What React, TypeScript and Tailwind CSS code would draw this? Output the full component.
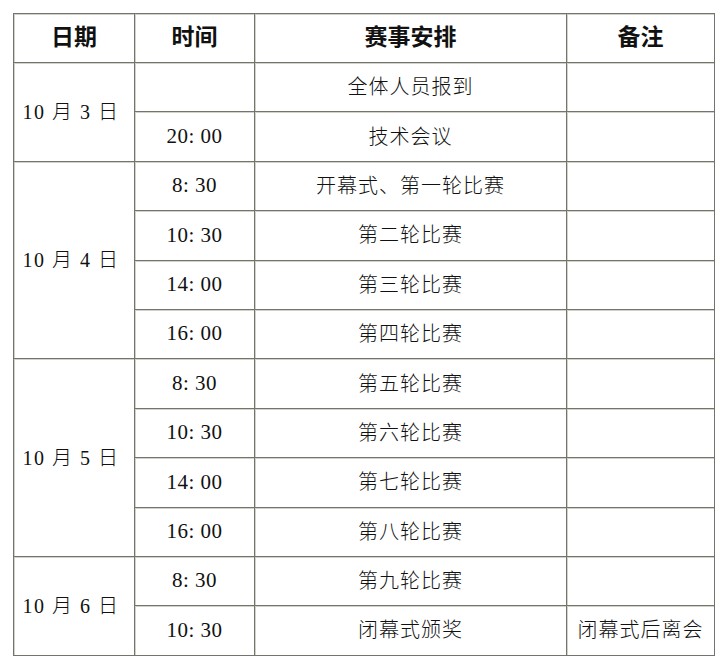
import React from "react";

type Row = { date?: string; span?: number; time: string; event: string; note?: string };

const rows: Row[] = [
  { date: "10 月 3 日", span: 2, time: "", event: "全体人员报到" },
  { time: "20: 00", event: "技术会议" },
  { date: "10 月 4 日", span: 4, time: "8: 30", event: "开幕式、第一轮比赛" },
  { time: "10: 30", event: "第二轮比赛" },
  { time: "14: 00", event: "第三轮比赛" },
  { time: "16: 00", event: "第四轮比赛" },
  { date: "10 月 5 日", span: 4, time: "8: 30", event: "第五轮比赛" },
  { time: "10: 30", event: "第六轮比赛" },
  { time: "14: 00", event: "第七轮比赛" },
  { time: "16: 00", event: "第八轮比赛" },
  { date: "10 月 6 日", span: 2, time: "8: 30", event: "第九轮比赛" },
  { time: "10: 30", event: "闭幕式颁奖", note: "闭幕式后离会" },
];

const cell =
  "border border-[#74746c] shadow-[inset_1px_1px_0_#d2d2ca] text-center align-middle p-0";

export default function App() {
  return (
    <div
      className="min-h-[668px] w-[720px] bg-white pl-[13px] pt-[13px] text-[#111]"
      style={{ fontFamily: '"Liberation Serif", "Noto Sans CJK SC", serif' }}
    >
      <table className="w-[701px] table-fixed border-collapse">
        <colgroup>
          <col className="w-[121px]" />
          <col className="w-[120px]" />
          <col className="w-[312px]" />
          <col className="w-[148px]" />
        </colgroup>
        <thead>
          <tr className="h-[49px]">
            <th className={`${cell} text-[23px] font-bold`}>日期</th>
            <th className={`${cell} text-[23px] font-bold`}>时间</th>
            <th className={`${cell} text-[23px] font-bold`}>赛事安排</th>
            <th className={`${cell} text-[23px] font-bold`}>备注</th>
          </tr>
        </thead>
        <tbody>
          {rows.map((r, i) => (
            <tr key={i} className="h-[49.4px]">
              {r.date && (
                <td rowSpan={r.span} className={`${cell} pr-[6px] text-[20px] font-light tracking-[1.5px]`}>
                  {r.date}
                </td>
              )}
              <td className={`${cell} text-[21px] tracking-[0.5px]`}>{r.time}</td>
              <td className={`${cell} text-[20px] font-light tracking-[1px]`}>{r.event}</td>
              <td className={`${cell} text-[20px] font-light tracking-[1px]`}>{r.note ?? ""}</td>
            </tr>
          ))}
        </tbody>
      </table>
    </div>
  );
}
